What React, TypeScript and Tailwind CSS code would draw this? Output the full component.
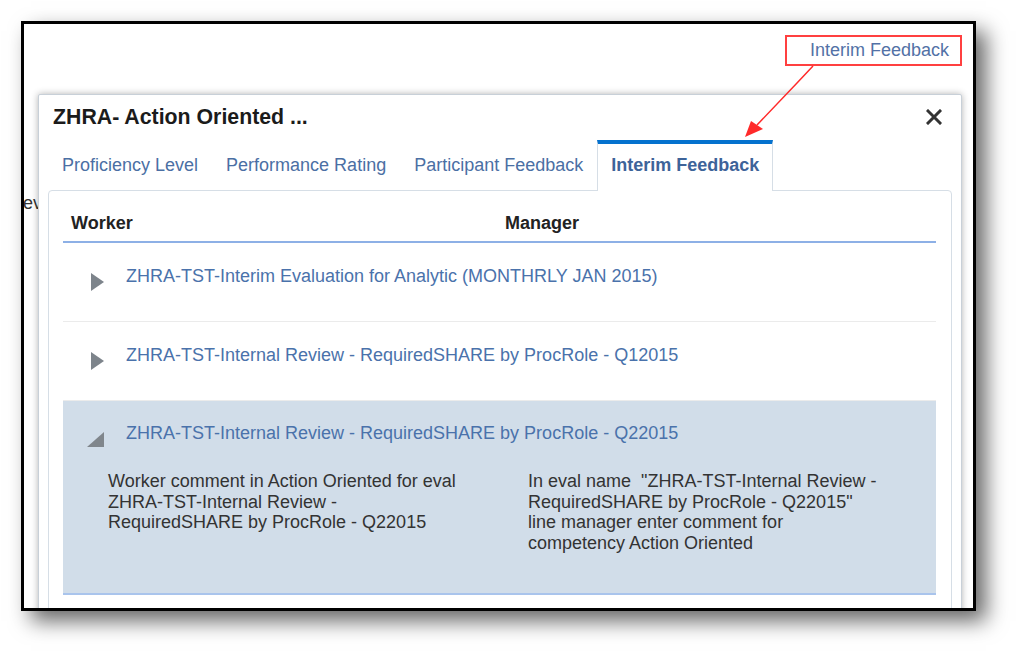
import React from 'react';

interface RowProps {
  title: string;
}

const tabs = ['Proficiency Level', 'Performance Rating', 'Participant Feedback'];

const CollapsedRow: React.FC<RowProps> = ({ title }) => (
  <div className="flex h-[79px] border-b border-[#ebebeb] pt-[23px]">
    <span className="ml-[28px] mt-[7px] h-0 w-0 border-y-[9px] border-l-[13px] border-y-transparent border-l-[#7d848b]" />
    <span className="ml-[22px] text-[#4a72ab]">{title}</span>
  </div>
);

export default function App() {
  return (
    <div className="relative h-[664px] w-[1030px] overflow-hidden bg-white font-['Liberation_Sans',Arial,sans-serif] text-[18px] leading-[21px]">
      <div className="relative ml-[21px] mt-[21px] h-[590px] w-[955px] overflow-hidden border-[3px] border-black bg-white shadow-[10px_10px_20px_rgba(0,0,0,0.6)]">
        {/* callout */}
        <div className="flex justify-end pr-[11px] pt-[11px]">
          <div className="flex h-[31px] w-[177px] items-center justify-end border-2 border-solid border-[#ff4040] pr-[11px] text-[#5271a6]">
            Interim Feedback
          </div>
        </div>

        {/* page text behind the dialog */}
        <div className="-ml-[1px] mt-[127px] text-[#333]">ev</div>

        {/* dialog */}
        <div className="absolute left-[14px] top-[70px] w-[924px] rounded-[2px] border border-[#c8d0d8] bg-white shadow-[0_0_7px_rgba(0,0,0,0.3)]">
          <div className="flex items-center justify-between pl-[14px] pr-[19px] pt-[10px]">
            <h1 className="text-[21.3px] font-bold leading-[24px] text-[#1b1b1b]">ZHRA- Action Oriented ...</h1>
            <svg width="16" height="16" viewBox="0 0 16 16">
              <path d="M2 2 L14 14 M14 2 L2 14" stroke="#333" strokeWidth="3" strokeLinecap="square" />
            </svg>
          </div>

          <div className="mt-[11px] px-[9px]">
            <div className="flex">
              {tabs.map((t) => (
                <div
                  key={t}
                  className="border-x border-t-4 border-transparent px-[13px] pb-[14px] pt-[11px] text-[#4b6fa4]"
                >
                  {t}
                </div>
              ))}
              <div className="relative z-10 -mb-px border-x border-t-4 border-x-[#d6dee6] border-t-[#0572ce] bg-white px-[13px] pb-[14px] pt-[11px] font-bold text-[#3d6399]">
                Interim Feedback
              </div>
            </div>

            <div className="rounded-[4px] border border-[#d6dee6] pb-[40px] pl-[14px] pr-[15px] pt-[22px]">
              <div className="flex border-b-2 border-[#8db0e6] pb-[7px] pl-[8px] font-bold text-[#222]">
                <span className="w-[434px]">Worker</span>
                <span>Manager</span>
              </div>

              <CollapsedRow title="ZHRA-TST-Interim Evaluation for Analytic (MONTHRLY JAN 2015)" />
              <CollapsedRow title="ZHRA-TST-Internal Review - RequiredSHARE by ProcRole - Q12015" />

              <div className="border-b-2 border-[#a9c4ec] bg-[#d1dde9] pb-[39px] pt-[22px]">
                <div className="flex">
                  <svg className="ml-[24px] mt-[9px]" width="17" height="15" viewBox="0 0 17 15">
                    <polygon points="17,0 17,15 0,15" fill="#80868c" />
                  </svg>
                  <span className="ml-[22px] text-[#4a72ab]">
                    ZHRA-TST-Internal Review - RequiredSHARE by ProcRole - Q22015
                  </span>
                </div>
                <div className="mt-[24px] flex whitespace-pre leading-[20.7px] text-[#333]">
                  <div className="w-[465px] pl-[45px]">
                    Worker comment in Action Oriented for eval
                    <br />
                    ZHRA-TST-Internal Review -
                    <br />
                    RequiredSHARE by ProcRole - Q22015
                  </div>
                  <div>
                    {'In eval name  "ZHRA-TST-Internal Review -'}
                    <br />
                    {'RequiredSHARE by ProcRole - Q22015"'}
                    <br />
                    line manager enter comment for
                    <br />
                    competency Action Oriented
                  </div>
                </div>
              </div>
            </div>
          </div>
        </div>
      </div>

      {/* callout arrow */}
      <svg className="pointer-events-none absolute left-0 top-0" width="1030" height="664">
        <polyline points="813,66 797,83 757,125" fill="none" stroke="#ff2a2a" strokeWidth="1.5" />
        <polygon points="745,137 751,121 763,129" fill="#ff2a2a" />
      </svg>
    </div>
  );
}
